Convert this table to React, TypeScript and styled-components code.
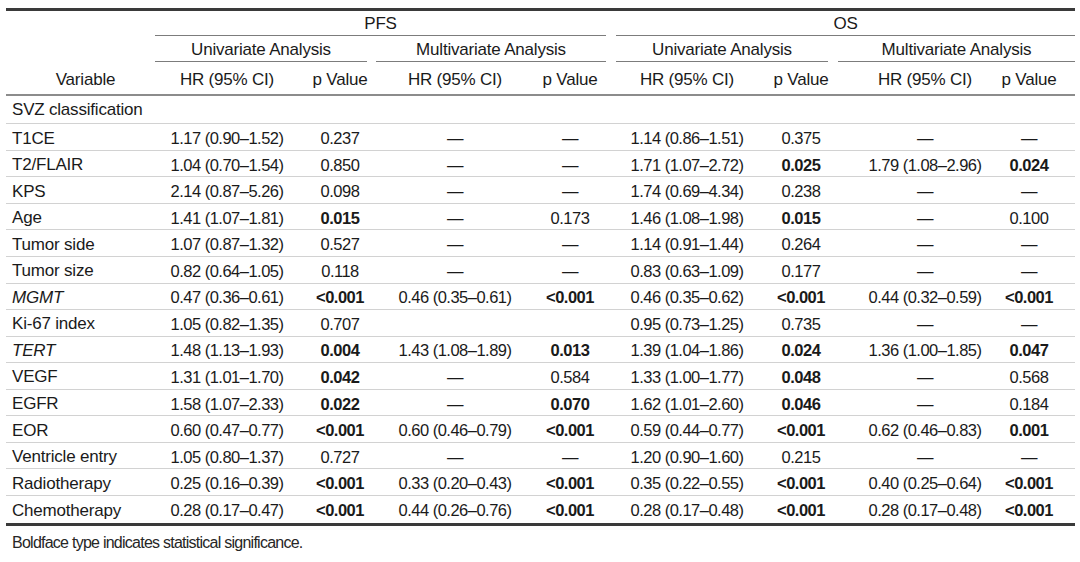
import React from 'react';
import styled, { createGlobalStyle } from 'styled-components';

const GlobalStyle = createGlobalStyle`
  *, *::before, *::after { box-sizing: border-box; }
  html, body { margin: 0; padding: 0; background: #fff; }
  body {
    font-family: "Liberation Sans", Arial, sans-serif;
    color: #1a1a1a;
  }
`;

// column widths: variable | PFS uni HR, p | PFS multi HR, p | OS uni HR, p | OS multi HR, p | right pad
const COLS = '159px 124px 102px 128px 102px 132px 96px 152px 56px 18px';

type Row = { name: string; italic?: boolean; cells: string[] };

// a leading "!" marks a value set in boldface
const rows: Row[] = [
  { name: 'T1CE', cells: ['1.17 (0.90–1.52)', '0.237', '—', '—', '1.14 (0.86–1.51)', '0.375', '—', '—'] },
  { name: 'T2/FLAIR', cells: ['1.04 (0.70–1.54)', '0.850', '—', '—', '1.71 (1.07–2.72)', '!0.025', '1.79 (1.08–2.96)', '!0.024'] },
  { name: 'KPS', cells: ['2.14 (0.87–5.26)', '0.098', '—', '—', '1.74 (0.69–4.34)', '0.238', '—', '—'] },
  { name: 'Age', cells: ['1.41 (1.07–1.81)', '!0.015', '—', '0.173', '1.46 (1.08–1.98)', '!0.015', '—', '0.100'] },
  { name: 'Tumor side', cells: ['1.07 (0.87–1.32)', '0.527', '—', '—', '1.14 (0.91–1.44)', '0.264', '—', '—'] },
  { name: 'Tumor size', cells: ['0.82 (0.64–1.05)', '0.118', '—', '—', '0.83 (0.63–1.09)', '0.177', '—', '—'] },
  { name: 'MGMT', italic: true, cells: ['0.47 (0.36–0.61)', '!<0.001', '0.46 (0.35–0.61)', '!<0.001', '0.46 (0.35–0.62)', '!<0.001', '0.44 (0.32–0.59)', '!<0.001'] },
  { name: 'Ki-67 index', cells: ['1.05 (0.82–1.35)', '0.707', '', '', '0.95 (0.73–1.25)', '0.735', '—', '—'] },
  { name: 'TERT', italic: true, cells: ['1.48 (1.13–1.93)', '!0.004', '1.43 (1.08–1.89)', '!0.013', '1.39 (1.04–1.86)', '!0.024', '1.36 (1.00–1.85)', '!0.047'] },
  { name: 'VEGF', cells: ['1.31 (1.01–1.70)', '!0.042', '—', '0.584', '1.33 (1.00–1.77)', '!0.048', '—', '0.568'] },
  { name: 'EGFR', cells: ['1.58 (1.07–2.33)', '!0.022', '—', '!0.070', '1.62 (1.01–2.60)', '!0.046', '—', '0.184'] },
  { name: 'EOR', cells: ['0.60 (0.47–0.77)', '!<0.001', '0.60 (0.46–0.79)', '!<0.001', '0.59 (0.44–0.77)', '!<0.001', '0.62 (0.46–0.83)', '!0.001'] },
  { name: 'Ventricle entry', cells: ['1.05 (0.80–1.37)', '0.727', '—', '—', '1.20 (0.90–1.60)', '0.215', '—', '—'] },
  { name: 'Radiotherapy', cells: ['0.25 (0.16–0.39)', '!<0.001', '0.33 (0.20–0.43)', '!<0.001', '0.35 (0.22–0.55)', '!<0.001', '0.40 (0.25–0.64)', '!<0.001'] },
  { name: 'Chemotherapy', cells: ['0.28 (0.17–0.47)', '!<0.001', '0.44 (0.26–0.76)', '!<0.001', '0.28 (0.17–0.48)', '!<0.001', '0.28 (0.17–0.48)', '!<0.001'] },
];

const groups = [
  { label: 'PFS', col: '2 / 6', ml: -10, mr: 15 },
  { label: 'OS', col: '6 / 11', ml: -5, mr: 0 },
];

const analyses = [
  { label: 'Univariate Analysis', col: '2 / 4', ml: -10, mr: 24 },
  { label: 'Multivariate Analysis', col: '4 / 6', ml: -15, mr: 15 },
  { label: 'Univariate Analysis', col: '6 / 8', ml: -5, mr: 21 },
  { label: 'Multivariate Analysis', col: '8 / 11', ml: -11, mr: 0 },
];

function App() {
  return (
    <Page>
      <GlobalStyle />
      <Table>
        <GridRow $height={25.5}>
          {groups.map((g) => (
            <GroupCell key={g.label} $col={g.col} $ml={g.ml} $mr={g.mr}>{g.label}</GroupCell>
          ))}
        </GridRow>
        <GridRow $height={26}>
          {analyses.map((a, i) => (
            <GroupCell key={i} $col={a.col} $ml={a.ml} $mr={a.mr}>{a.label}</GroupCell>
          ))}
        </GridRow>
        <HeadRow>
          <HeadCell>Variable</HeadCell>
          {[0, 1, 2, 3].map((i) => (
            <React.Fragment key={i}>
              <HeadCell>HR (95% CI)</HeadCell>
              <HeadCell>p Value</HeadCell>
            </React.Fragment>
          ))}
        </HeadRow>
        <GridRow $height={28.3} $line>
          <VarCell>SVZ classification</VarCell>
        </GridRow>
        {rows.map((r, i) => (
          <GridRow key={r.name} $height={26.55} $line={i < rows.length - 1} $pad>
            <VarCell $italic={r.italic}>{r.name}</VarCell>
            {r.cells.map((c, j) => (
              <ValueCell key={j} $bold={c.startsWith('!')}>{c.replace(/^!/, '')}</ValueCell>
            ))}
          </GridRow>
        ))}
      </Table>
      <Note>Boldface type indicates statistical significance.</Note>
    </Page>
  );
}

export default App;

const Page = styled.div`
  width: 1080px;
  height: 562px;
  padding: 7.5px 5px 0 6px;
  overflow: hidden;
`;

const Table = styled.div`
  width: 1069px;
  border-top: 3px solid #3a3a3a;
  border-bottom: 3px solid #3a3a3a;
  font-size: 17px;
  letter-spacing: -0.2px;
`;

const GridRow = styled.div<{ $height: number; $line?: boolean; $pad?: boolean }>`
  display: grid;
  grid-template-columns: ${COLS};
  height: ${(p) => p.$height}px;
  border-bottom: ${(p) => (p.$line ? '1.5px solid #d2d2d2' : 'none')};
  padding-top: ${(p) => (p.$pad ? '3px' : '0')};
  align-items: center;
`;

const HeadRow = styled.div`
  display: grid;
  grid-template-columns: ${COLS};
  height: 34px;
  padding-top: 4px;
  border-bottom: 2px solid #8c8c8c;
  align-items: center;
`;

const GroupCell = styled.div<{ $col: string; $ml: number; $mr: number }>`
  grid-column: ${(p) => p.$col};
  align-self: stretch;
  display: flex;
  align-items: center;
  justify-content: center;
  padding-top: 2px;
  margin-left: ${(p) => p.$ml}px;
  margin-right: ${(p) => p.$mr}px;
  border-bottom: 1.5px solid #7c7c7c;
  white-space: nowrap;
`;

const HeadCell = styled.div`
  text-align: center;
  white-space: nowrap;
`;

const VarCell = styled.div<{ $italic?: boolean }>`
  padding-left: 6px;
  white-space: nowrap;
  font-style: ${(p) => (p.$italic ? 'italic' : 'normal')};
`;

const ValueCell = styled.div<{ $bold?: boolean }>`
  text-align: center;
  white-space: nowrap;
  font-size: 16.5px;
  letter-spacing: -0.5px;
  font-weight: ${(p) => (p.$bold ? 700 : 400)};
`;

const Note = styled.p`
  margin: 8px 0 0 6px;
  font-size: 16px;
  letter-spacing: -0.75px;
  color: #262626;
`;
